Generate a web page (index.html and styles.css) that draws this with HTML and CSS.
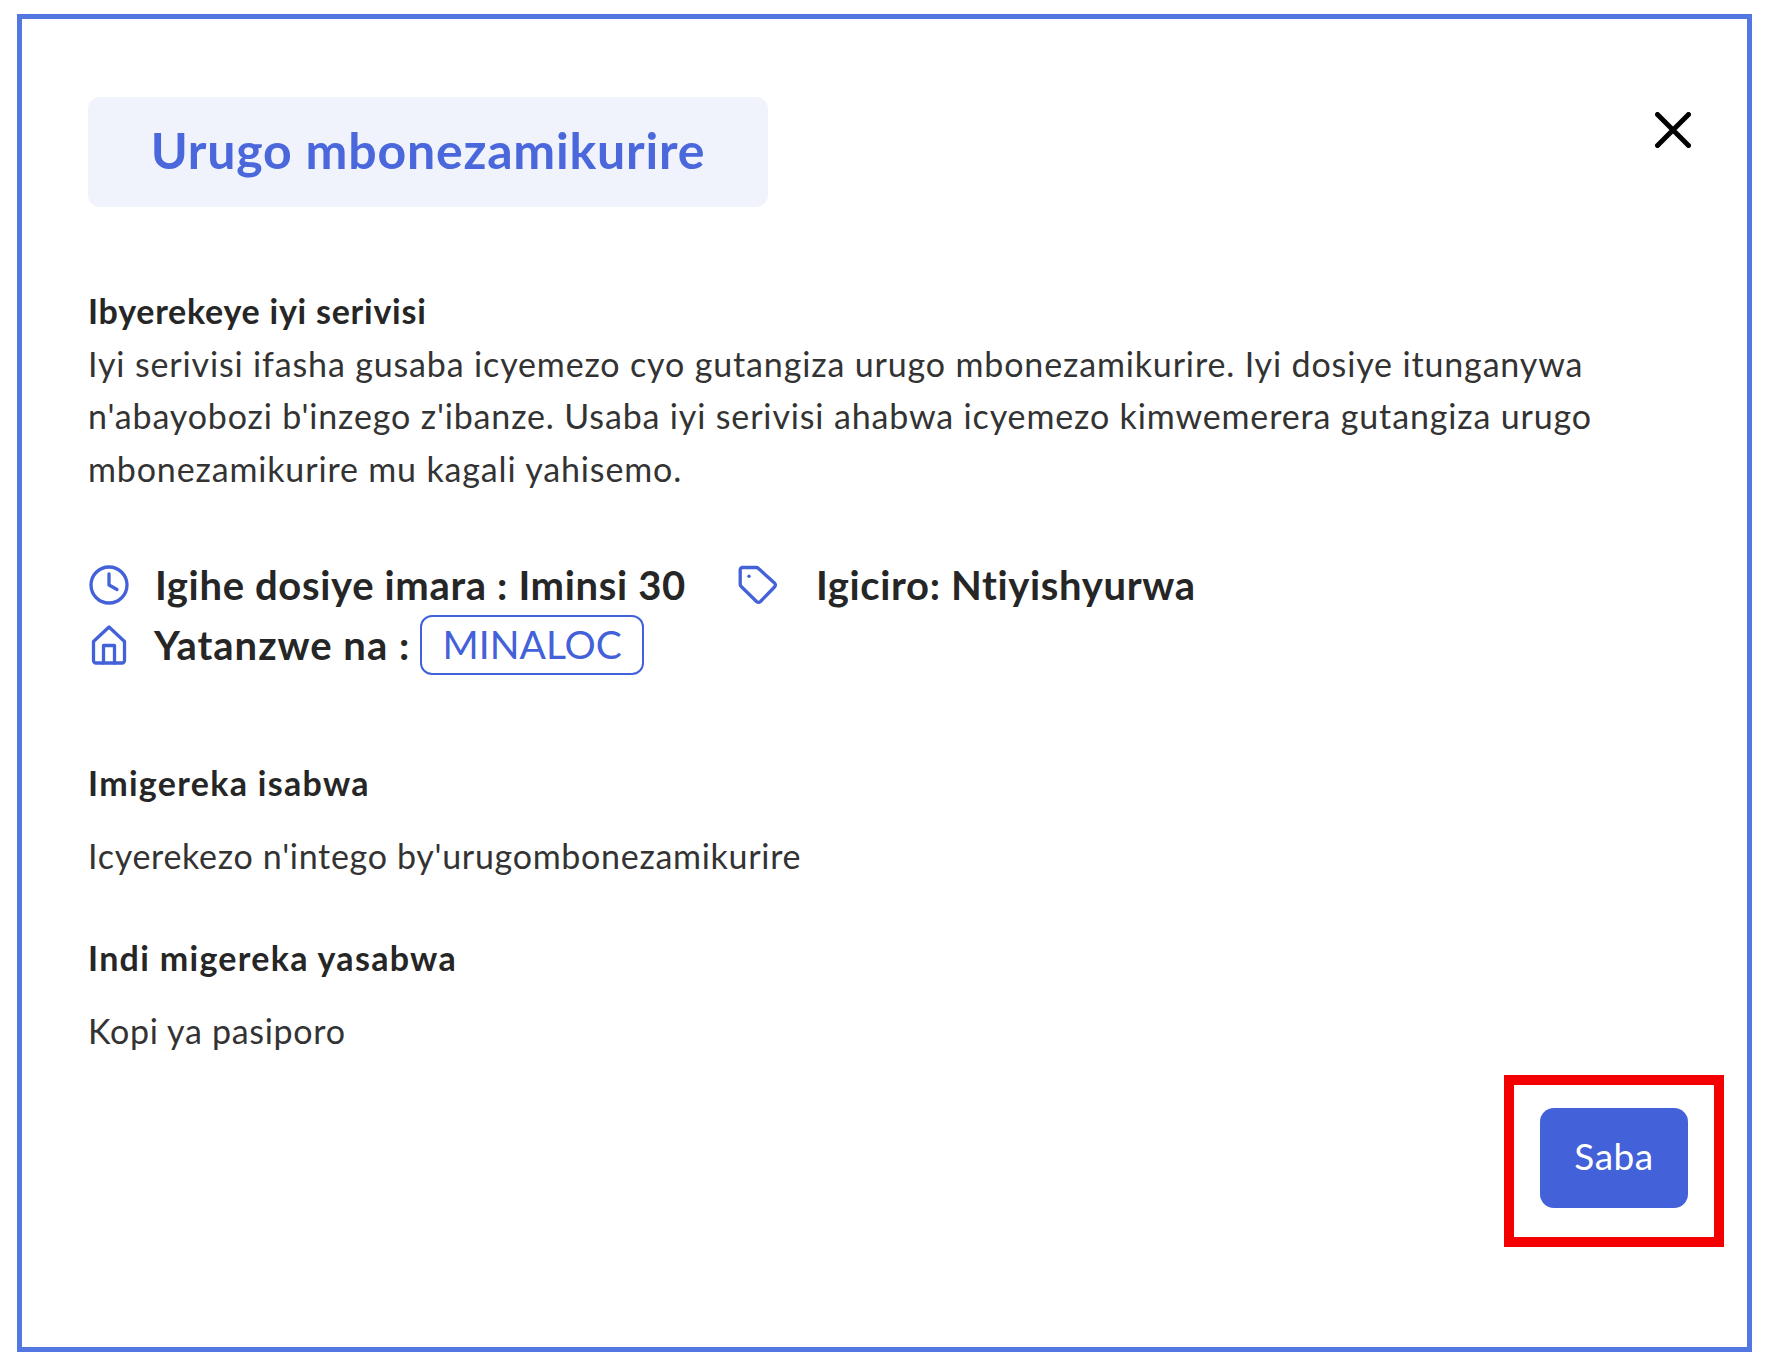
FILE: index.html
```html
<!DOCTYPE html>
<html lang="rw">
<head>
<meta charset="utf-8">
<title>Urugo mbonezamikurire</title>
<link rel="stylesheet" href="styles.css">
</head>
<body>
<main class="dialog">
  <header class="dialog-head">
    <h1 class="title">Urugo mbonezamikurire</h1>
    <svg class="close" viewBox="0 0 36 36" aria-label="close"><path d="M2.5 2.5 33.5 33.5M33.5 2.5 2.5 33.5"/></svg>
  </header>
  <section class="about">
    <h2 class="heading">Ibyerekeye iyi serivisi</h2>
    <p class="para">Iyi serivisi ifasha gusaba icyemezo cyo gutangiza urugo mbonezamikurire. Iyi dosiye itunganywa n'abayobozi b'inzego z'ibanze. Usaba iyi serivisi ahabwa icyemezo kimwemerera gutangiza urugo mbonezamikurire mu kagali yahisemo.</p>
  </section>
  <section class="facts">
    <div class="fact-row">
      <svg class="icon icon-clock" viewBox="0 0 40 40"><circle cx="20" cy="20" r="18"/><path d="M20 9V20l8 4.500"/></svg>
      <span class="fact">Igihe dosiye imara : Iminsi 30</span>
      <svg class="icon icon-tag" viewBox="0 0 40 40"><path d="M4.500 2.500H18a3.500 3.500 0 0 1 2.500 1L36.500 18a3 3 0 0 1 0 4L22.500 36.500a3 3 0 0 1-4 0L3.200 21.500a3 3 0 0 1-1-2.300V4.800A2.300 2.300 0 0 1 4.500 2.500z"/><circle class="icon-dot" cx="11" cy="11.300" r="1.700"/></svg>
      <span class="fact">Igiciro: Ntiyishyurwa</span>
    </div>
    <div class="fact-row">
      <svg class="icon icon-home" viewBox="0 0 36 40"><path d="M18 2 33.500 16.500V35.500a2.500 2.500 0 0 1-2.500 2.500H5a2.500 2.500 0 0 1-2.500-2.500V16.500z"/><path d="M12.500 38V20.500h11V38"/></svg>
      <span class="fact fact-wide">Yatanzwe na :</span>
      <span class="badge">MINALOC</span>
    </div>
  </section>
  <section class="docs">
    <h2 class="heading heading-wide">Imigereka isabwa</h2>
    <p class="doc">Icyerekezo n'intego by'urugombonezamikurire</p>
  </section>
  <section class="docs docs-other">
    <h2 class="heading heading-wide">Indi migereka yasabwa</h2>
    <p class="doc">Kopi ya pasiporo</p>
  </section>
  <footer class="actions">
    <div class="action-wrap">
      <button class="apply" type="button">Saba</button>
      <span class="highlight"></span>
    </div>
  </footer>
</main>
</body>
</html>
```
FILE: styles.css
```css
* { box-sizing: border-box; }
html, body { margin: 0; padding: 0; background: #fff; }
body {
  width: 1770px;
  height: 1362px;
  padding: 14px 18px 10px 17px;
  font-family: "Lato", "Noto Sans", sans-serif;
  color: #262626;
}
.dialog {
  height: 1338px;
  border: 5px solid #5277e0;
  padding: 78px 58px 0 66px;
}
.dialog-head { display: flex; justify-content: space-between; align-items: flex-start; }
.title {
  margin: 0;
  width: 680px;
  height: 110px;
  border-radius: 12px;
  background: #f0f3fc;
  color: #4a68dc;
  font-size: 50px;
  letter-spacing: 0.8px;
  font-weight: 700;
  line-height: 106px;
  text-align: center;
}
.close { width: 36px; height: 36px; margin-top: 15px; margin-right: -2px; }
.close path { fill: none; stroke: #000; stroke-width: 5; stroke-linecap: round; }
.about { margin-top: 78px; }
.heading { margin: 0; font-size: 34px; letter-spacing: 0.75px; font-weight: 700; line-height: 52px; color: #262626; }
.heading-wide { letter-spacing: 1.3px; }
.para { margin: 1px 0 0; font-size: 34px; letter-spacing: 0.85px; line-height: 52.400px; color: #333; }
.facts { margin-top: 60px; }
.fact-row { display: flex; align-items: center; height: 60px; }
.icon { fill: none; stroke: #4361d8; stroke-width: 3.300; flex: none; stroke-linejoin: round; stroke-linecap: round; }
.icon-dot { fill: #4361d8; stroke: none; }
.icon-clock { width: 40px; height: 40px; margin: 0 26px 0 1px; }
.icon-tag { width: 40px; height: 40px; margin: 0 38px 0 52px; }
.icon-home { width: 36px; height: 40px; margin: 0 27px 0 3px; }
.fact { font-size: 40px; letter-spacing: 0.65px; font-weight: 700; color: #262626; }
.fact-wide { letter-spacing: 1px; }
.badge {
  margin-left: 10px;
  width: 224px;
  height: 60px;
  border: 2.500px solid #4361d8;
  border-radius: 12px;
  color: #4361d8;
  font-size: 39px;
  line-height: 55px;
  text-align: center;
}
.docs { margin-top: 82px; }
.docs-other { margin-top: 50px; }
.doc { margin: 21px 0 0; font-size: 34px; letter-spacing: 0.7px; line-height: 52px; color: #333; }
.actions { display: flex; justify-content: flex-end; margin-top: 51px; padding-right: 1px; }
.action-wrap { position: relative; }
.apply {
  display: block;
  width: 148px;
  height: 100px;
  padding: 0 0 5px;
  border: 0;
  border-radius: 14px;
  background: #4361d8;
  color: #fff;
  font-family: inherit;
  font-size: 37px;
  letter-spacing: 0.5px;
}
.highlight {
  position: absolute;
  left: -36px;
  top: -33px;
  width: 220px;
  height: 172px;
  border: 10px solid #f40000;
}
```
